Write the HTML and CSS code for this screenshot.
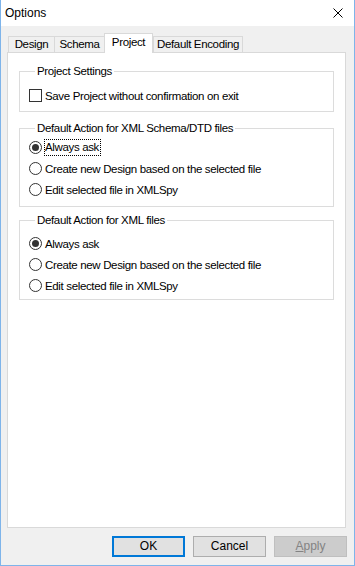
FILE: index.html
```html
<!DOCTYPE html>
<html lang="en">
<head>
    <meta charset="UTF-8">
    <title>Options</title>
    <link rel="stylesheet" href="styles.css">
</head>
<body>
    <div class="window">
        <div class="titlebar">
            <span class="title">Options</span>
            <svg class="close" width="10" height="10" viewBox="0 0 10 10">
                <path d="M0.5 0.5 L9.5 9.5 M9.5 0.5 L0.5 9.5" stroke="#000" stroke-width="1"/>
            </svg>
        </div>
        <div class="client">
            <div class="tabs">
                <div class="tab tab-design">Design</div>
                <div class="tab tab-schema">Schema</div>
                <div class="tab tab-project active">Project</div>
                <div class="tab tab-encoding">Default Encoding</div>
            </div>
            <div class="panel">
                <fieldset class="group group-settings">
                    <legend>Project Settings</legend>
                    <div class="option">
                        <span class="check"></span>
                        <span>Save Project without confirmation on exit</span>
                    </div>
                </fieldset>
                <fieldset class="group group-schema">
                    <legend>Default Action for XML Schema/DTD files</legend>
                    <div class="option">
                        <span class="radio checked"></span>
                        <span class="focus">Always ask</span>
                    </div>
                    <div class="option">
                        <span class="radio"></span>
                        <span>Create new Design based on the selected file</span>
                    </div>
                    <div class="option">
                        <span class="radio"></span>
                        <span>Edit selected file in XMLSpy</span>
                    </div>
                </fieldset>
                <fieldset class="group group-xml">
                    <legend>Default Action for XML files</legend>
                    <div class="option">
                        <span class="radio checked"></span>
                        <span>Always ask</span>
                    </div>
                    <div class="option">
                        <span class="radio"></span>
                        <span>Create new Design based on the selected file</span>
                    </div>
                    <div class="option">
                        <span class="radio"></span>
                        <span>Edit selected file in XMLSpy</span>
                    </div>
                </fieldset>
            </div>
            <div class="buttons">
                <div class="btn btn-default">OK</div>
                <div class="btn">Cancel</div>
                <div class="btn disabled"><u>A</u>pply</div>
            </div>
        </div>
    </div>
</body>
</html>
```

FILE: styles.css
```css
* {
    margin: 0;
    padding: 0;
    box-sizing: border-box;
}

body {
    width: 355px;
    height: 566px;
    font-family: 'Liberation Sans', Arial, sans-serif;
    font-size: 11.5px;
    letter-spacing: -0.35px;
    color: #000;
    background: #fff;
}

.window {
    width: 355px;
    height: 566px;
    display: flex;
    flex-direction: column;
    border: 1px solid #7eb4ea;
    border-top: none;
    background: #f0f0f0;
}

.titlebar {
    height: 26px;
    background: #fff;
    display: flex;
    align-items: center;
    justify-content: space-between;
    padding: 0 11px 0 4px;
    flex-shrink: 0;
}

.title {
    font-size: 12px;
    letter-spacing: 0;
}

.client {
    flex: 1;
    display: flex;
    flex-direction: column;
    padding: 7px 8px 8px 6px;
}

.tabs {
    display: flex;
    align-items: flex-end;
    height: 19px;
    padding-left: 1px;
    position: relative;
    z-index: 1;
}

.tab {
    height: 16px;
    line-height: 15px;
    border: 1px solid #d9d9d9;
    border-bottom: none;
    background: #f0f0f0;
    text-align: center;
    white-space: nowrap;
}

.tab-design {
    width: 47px;
    margin-right: -1px;
}

.tab-schema {
    width: 51px;
}

.tab.active {
    width: 49px;
    height: 20px;
    line-height: 17px;
    background: #fff;
    margin-bottom: -1px;
    margin-left: -1px;
    position: relative;
    z-index: 2;
}

.tab-encoding {
    width: 90px;
}

.panel {
    flex: 1;
    background: #fff;
    border: 1px solid #d9d9d9;
    padding: 11px 11px 0 11px;
}

.group {
    border: 1px solid #dcdcdc;
    padding: 0 0 0 9px;
}

.group legend {
    margin-left: 6px;
    padding: 0 2px;
    line-height: 15px;
}

.group-settings {
    height: 48px;
    padding-top: 6px;
    margin-bottom: 9px;
}

.group-schema {
    height: 86px;
    padding-top: 1px;
    margin-bottom: 6px;
}

.group-xml {
    height: 87px;
    padding-top: 5px;
}

.option {
    display: flex;
    align-items: center;
    gap: 3px;
    height: 21px;
    white-space: nowrap;
}

.check {
    width: 13px;
    height: 13px;
    border: 1px solid #333;
    background: #fff;
    flex-shrink: 0;
}

.radio {
    width: 13px;
    height: 13px;
    border: 1px solid #333;
    border-radius: 50%;
    background: #fff;
    flex-shrink: 0;
    display: flex;
    align-items: center;
    justify-content: center;
}

.radio.checked::after {
    content: "";
    width: 7px;
    height: 7px;
    border-radius: 50%;
    background: #333;
}

.focus {
    outline: 1px dotted #000;
    outline-offset: 0;
    line-height: 15px;
    padding-right: 1px;
}

.buttons {
    display: flex;
    justify-content: flex-end;
    gap: 8px;
    margin-top: 8px;
    margin-right: -1px;
}

.btn {
    width: 73px;
    height: 21px;
    line-height: 19px;
    text-align: center;
    font-size: 12px;
    letter-spacing: 0;
    background: #e1e1e1;
    border: 1px solid #adadad;
}

.btn-default {
    border: 2px solid #0078d7;
    line-height: 17px;
}

.btn.disabled {
    background: #cccccc;
    border-color: #bfbfbf;
    color: #838383;
}
```
